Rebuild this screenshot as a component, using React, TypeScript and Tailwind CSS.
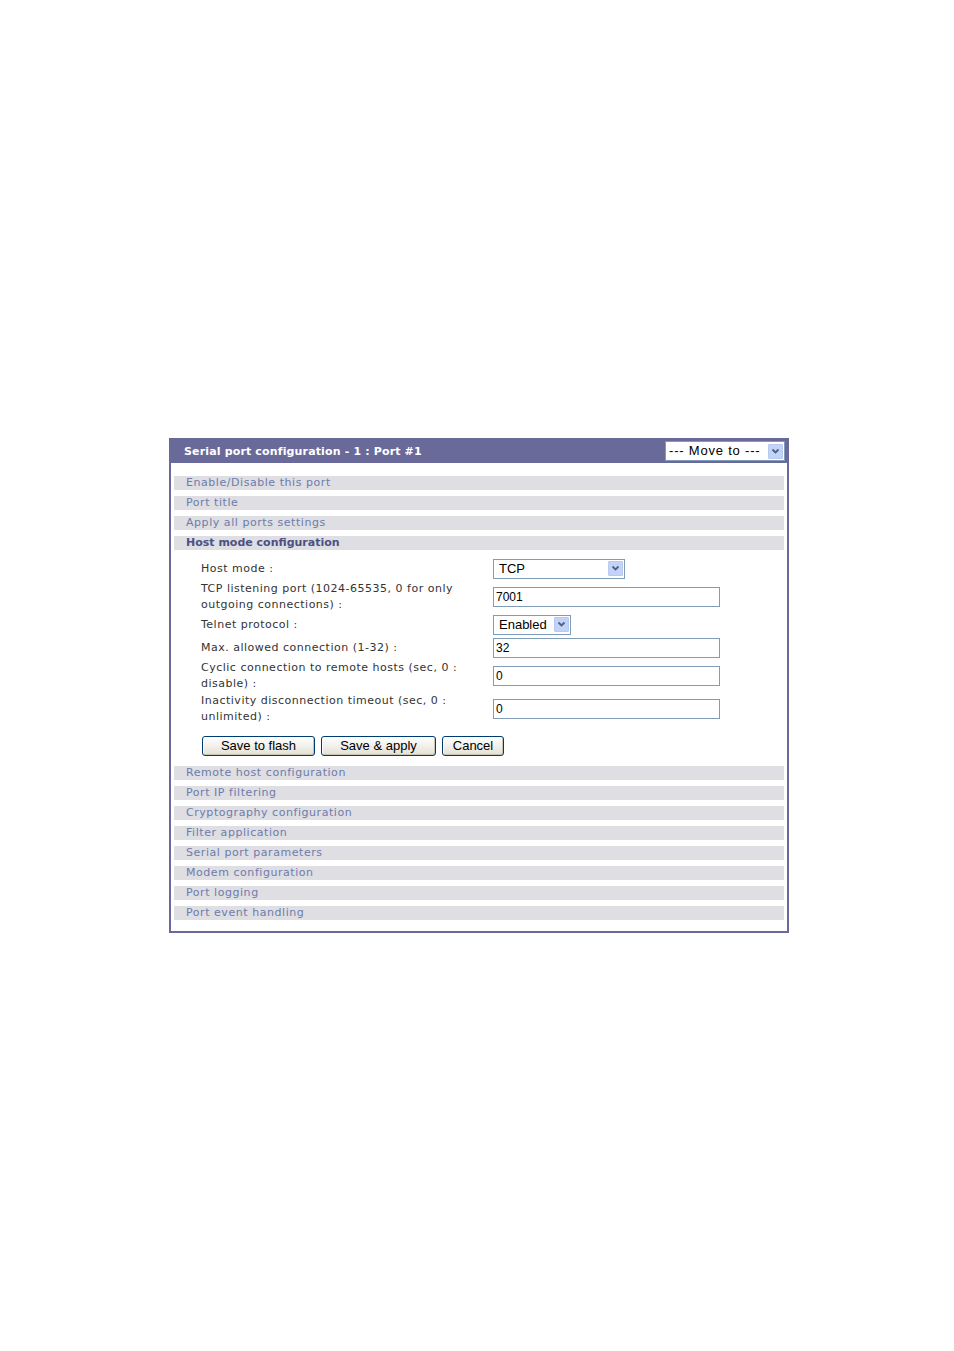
import React from "react";

const verdana = { fontFamily: '"DejaVu Sans", Verdana, sans-serif' };
const arial = { fontFamily: '"Liberation Sans", Arial, sans-serif' };

function Arrow() {
  return (
    <div className="flex h-[15px] w-[15px] items-center justify-center rounded-[1px] border border-[#b9c9ef] bg-[#c3d3f8]">
      <svg width="9" height="7" viewBox="0 0 9 7">
        <path d="M1.5 1.5 L4.5 4.5 L7.5 1.5" fill="none" stroke="#4d6185" strokeWidth="1.8" />
      </svg>
    </div>
  );
}

function Select({ value, width }: { value: string; width: string }) {
  return (
    <div
      className={`flex h-[20px] ${width} items-center justify-between border border-[#7f9db9] bg-white pl-[5px] pr-[1px] text-[13px] text-black`}
      style={arial}
    >
      <span>{value}</span>
      <Arrow />
    </div>
  );
}

function Input({ value }: { value: string }) {
  return (
    <div
      className="flex h-[20px] w-[227px] items-center border border-[#7f9db9] bg-white pl-[2px] text-[12px] text-black"
      style={arial}
    >
      {value}
    </div>
  );
}

function Bar({ text, bold }: { text: string; bold?: boolean }) {
  return (
    <div
      className={`mb-[6px] flex h-[14px] items-center bg-[#dedee3] pl-[12px] text-[11px] leading-[14px] ${
        bold ? "font-bold text-[#4b5184]" : "tracking-[0.55px] text-[#6d7cab]"
      }`}
      style={verdana}
    >
      {text}
    </div>
  );
}

function Row({ label, h, children }: { label: React.ReactNode; h: string; children: React.ReactNode }) {
  return (
    <div className={`flex ${h} items-center`}>
      <div
        className="w-[322px] pl-[30px] pr-[22px] text-[11px] leading-[16px] tracking-[0.5px] text-[#333333]"
        style={verdana}
      >
        {label}
      </div>
      <div>{children}</div>
    </div>
  );
}

function Button({ text, width }: { text: string; width: string }) {
  return (
    <div
      className={`flex h-[20px] ${width} items-center justify-center rounded-[3px] border border-[#003c74] bg-gradient-to-b from-white to-[#e3e1d6] text-[13px] text-black shadow-[inset_-1px_-1px_0_#c9c5b4,inset_1px_1px_0_#ffffff]`}
      style={arial}
    >
      {text}
    </div>
  );
}

export default function App() {
  return (
    <div className="min-h-[1351px] w-[954px] bg-white pl-[169px] pt-[438px]">
      <div className="w-[620px] border-2 border-[#6a6a9a] bg-white">
        <div className="flex h-[23px] items-start justify-between bg-[#6a6a9a]">
          <div
            className="pl-[13px] pt-[5px] text-[11px] font-bold leading-[14px] tracking-[0.15px] text-white"
            style={verdana}
          >
            Serial port configuration - 1 : Port #1
          </div>
          <div
            className="mr-[2px] mt-[1px] flex h-[20px] w-[120px] items-center justify-between border border-[#7f9db9] bg-white pl-[3px] pr-[1px] text-[13px] tracking-[0.8px] text-black"
            style={arial}
          >
            <span>--- Move to ---</span>
            <Arrow />
          </div>
        </div>
        <div className="px-[3px] pb-[5px] pt-[13px]">
          <Bar text="Enable/Disable this port" />
          <Bar text="Port title" />
          <Bar text="Apply all ports settings" />
          <Bar text="Host mode configuration" bold />
          <div className="-mx-[3px] pt-[1px]">
            <Row label="Host mode :" h="h-[23px]">
              <Select value="TCP" width="w-[132px]" />
            </Row>
            <Row label="TCP listening port (1024-65535, 0 for only outgoing connections) :" h="h-[33px]">
              <Input value="7001" />
            </Row>
            <Row label="Telnet protocol :" h="h-[23px]">
              <Select value="Enabled" width="w-[78px]" />
            </Row>
            <Row label="Max. allowed connection (1-32) :" h="h-[23px]">
              <Input value="32" />
            </Row>
            <Row label="Cyclic connection to remote hosts (sec, 0 : disable) :" h="h-[33px]">
              <Input value="0" />
            </Row>
            <Row label="Inactivity disconnection timeout (sec, 0 : unlimited) :" h="h-[33px]">
              <Input value="0" />
            </Row>
            <div className="mb-[10px] mt-[11px] flex gap-[6px] pl-[31px]">
              <Button text="Save to flash" width="w-[113px]" />
              <Button text="Save & apply" width="w-[115px]" />
              <Button text="Cancel" width="w-[62px]" />
            </div>
          </div>
          <Bar text="Remote host configuration" />
          <Bar text="Port IP filtering" />
          <Bar text="Cryptography configuration" />
          <Bar text="Filter application" />
          <Bar text="Serial port parameters" />
          <Bar text="Modem configuration" />
          <Bar text="Port logging" />
          <Bar text="Port event handling" />
        </div>
      </div>
    </div>
  );
}
